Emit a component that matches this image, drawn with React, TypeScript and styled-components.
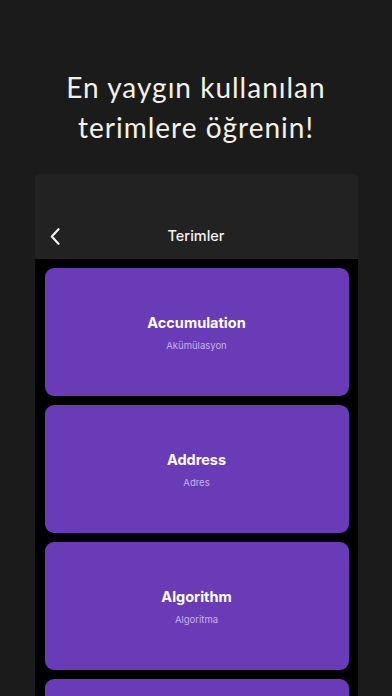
import React from "react";
import styled, { createGlobalStyle } from "styled-components";

const Global = createGlobalStyle`
  html, body { margin: 0; padding: 0; background: #1b1b1b; }
  body { width: 392px; height: 696px; overflow: hidden; font-family: Inter, "Noto Sans", sans-serif; }
`;

const Page = styled.div`
  width: 392px;
  height: 696px;
  display: flex;
  flex-direction: column;
  align-items: center;
  background: #1b1b1b;
  overflow: hidden;
`;

const Headline = styled.h1`
  margin: 67px 0 0;
  height: 107px;
  flex-shrink: 0;
  font-family: "Lato", "Open Sans", sans-serif;
  font-weight: 400;
  font-size: 28px;
  line-height: 40px;
  letter-spacing: 1px;
  color: #f4f1e8;
  text-align: center;
`;

const Phone = styled.div`
  width: 323px;
  flex: 1;
  min-height: 0;
  display: flex;
  flex-direction: column;
  background: #000;
  border-radius: 3px 3px 0 0;
  overflow: hidden;
`;

const NavBar = styled.div`
  height: 85px;
  flex-shrink: 0;
  background: #222222;
  display: grid;
  grid-template-columns: 40px 1fr 40px;
  align-items: end;
  padding-bottom: 13px;
  box-sizing: border-box;
`;

const Back = styled.div`
  display: flex;
  justify-content: center;
  padding-left: 1px;
  height: 20px;
  align-items: center;
`;

const NavTitle = styled.div`
  text-align: center;
  color: #f2f2f2;
  font-size: 14.5px;
  font-weight: 500;
  line-height: 20px;
`;

const List = styled.div`
  display: flex;
  flex-direction: column;
  gap: 9px;
  padding: 9px 9px 0 10px;
`;

const Card = styled.div`
  height: 128px;
  flex-shrink: 0;
  border-radius: 9px;
  background: #6a3bb6;
  display: flex;
  flex-direction: column;
  align-items: center;
  justify-content: center;
  gap: 7px;
  box-sizing: border-box;
`;

const Term = styled.div`
  color: #ffffff;
  font-size: 14.5px;
  font-weight: 700;
  line-height: 20px;
`;

const Translation = styled.div`
  color: #c8b2ee;
  font-size: 9.5px;
  line-height: 12px;
`;

const terms = [
  ["Accumulation", "Akümülasyon"],
  ["Address", "Adres"],
  ["Algorithm", "Algoritma"],
];

export default function App() {
  return (
    <Page>
      <Global />
      <Headline>
        En yaygın kullanılan
        <br />
        terimlere öğrenin!
      </Headline>
      <Phone>
        <NavBar>
          <Back>
            <svg width="10" height="17" viewBox="0 0 10 17">
              <path d="M8.5 1.2 L1.8 8.5 L8.5 15.8" fill="none" stroke="#f4f4f4" strokeWidth="2.1" strokeLinecap="round" strokeLinejoin="round" />
            </svg>
          </Back>
          <NavTitle>Terimler</NavTitle>
          <div />
        </NavBar>
        <List>
          {terms.map(([t, tr]) => (
            <Card key={t}>
              <Term>{t}</Term>
              <Translation>{tr}</Translation>
            </Card>
          ))}
          <Card aria-hidden="true" />
        </List>
      </Phone>
    </Page>
  );
}
